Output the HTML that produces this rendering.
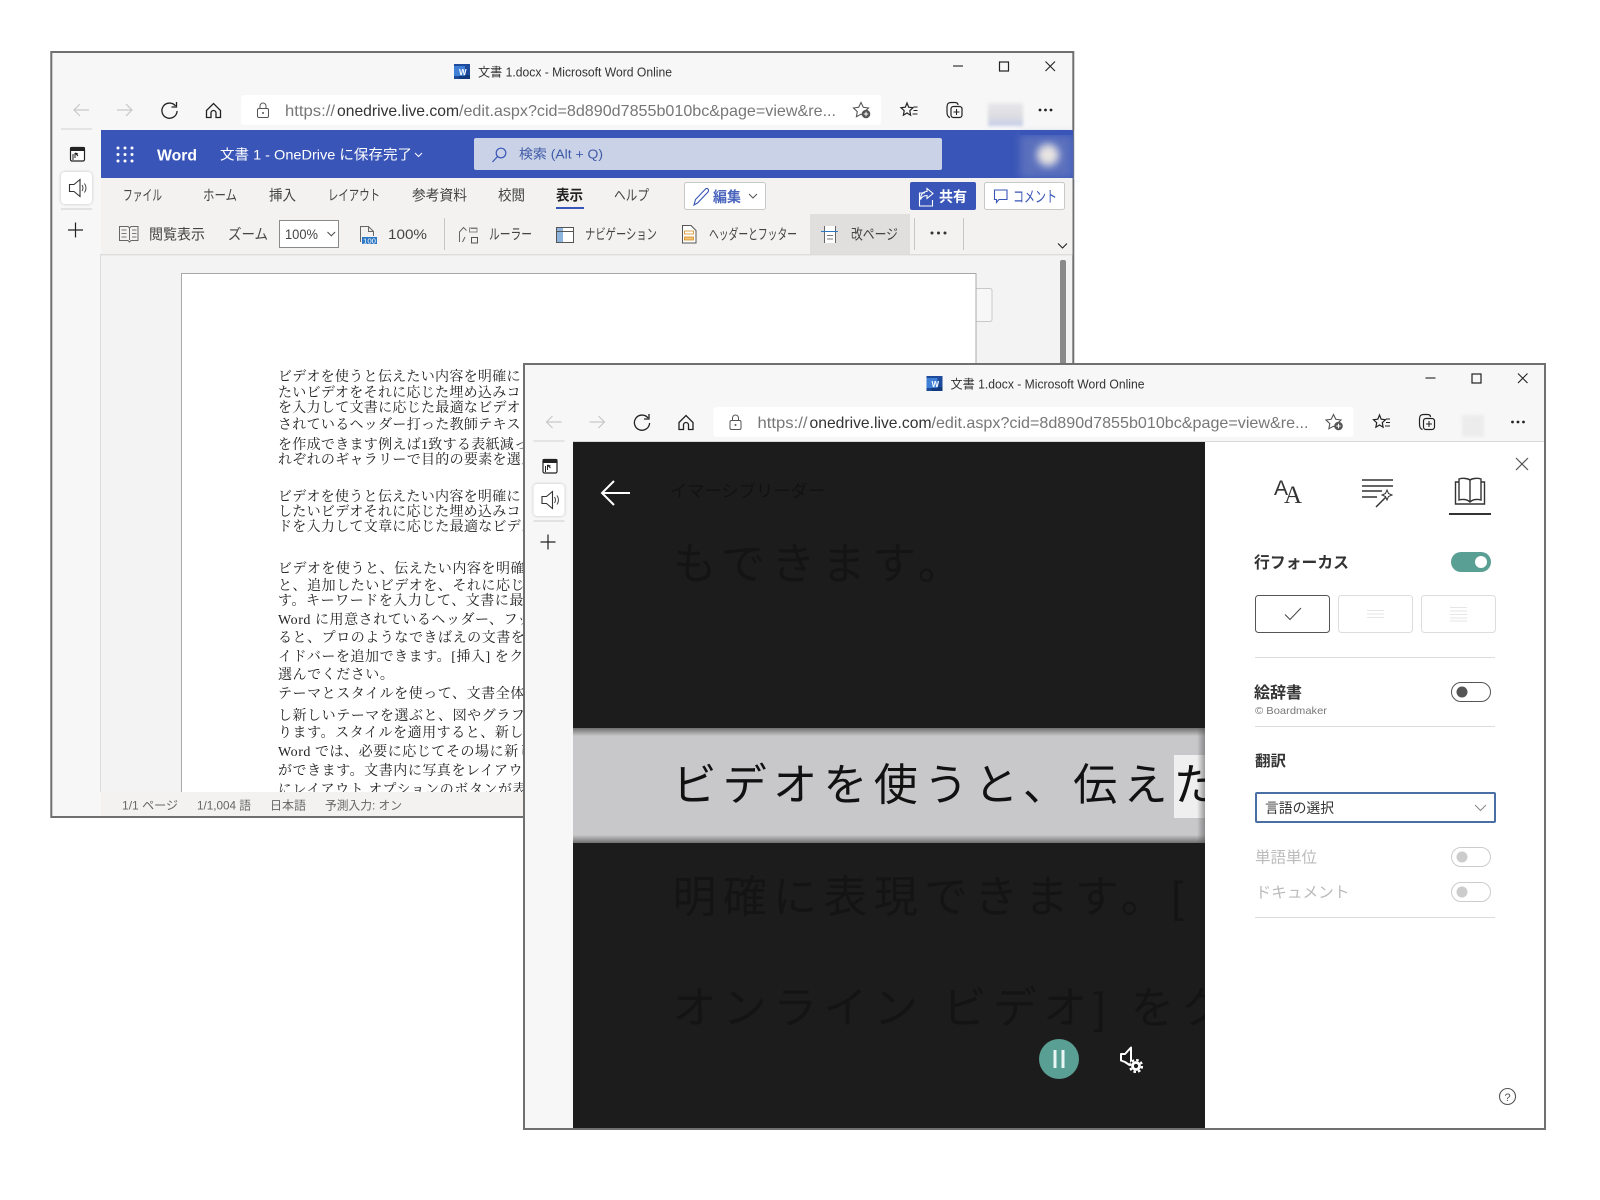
<!DOCTYPE html>
<html lang="ja"><head><meta charset="utf-8"><title>Word Online</title>
<style>
html,body{margin:0;padding:0;background:#fff;width:1600px;height:1200px;overflow:hidden}
svg{display:block}
text{font-family:"Liberation Sans","Noto Sans CJK JP",sans-serif;white-space:pre}
.doc text{font-family:"Liberation Serif","Noto Serif CJK SC",serif;font-size:14px;letter-spacing:.3px;fill:#222}
.doc .w{letter-spacing:.55px}
.t{font-size:14.500px;fill:#444}
.dk{font-size:44px;letter-spacing:6.300px;fill:#141414}
</style></head><body>
<svg xmlns="http://www.w3.org/2000/svg" width="1600" height="1200" viewBox="0 0 1600 1200">
<defs>
<filter id="b4" x="-50%" y="-50%" width="200%" height="200%"><feGaussianBlur stdDeviation="4"/></filter>
<filter id="b1" x="-20%" y="-20%" width="140%" height="140%"><feGaussianBlur stdDeviation="1.500"/></filter>
<linearGradient id="band" x1="0" y1="0" x2="0" y2="1">
<stop offset="0" stop-color="#707070"/><stop offset=".07" stop-color="#c8c8ca"/><stop offset=".93" stop-color="#c8c8ca"/><stop offset="1" stop-color="#707070"/>
</linearGradient>
<linearGradient id="bandr" x1="0" y1="0" x2="1" y2="0">
<stop offset="0" stop-color="#555" stop-opacity="0"/><stop offset="1" stop-color="#555" stop-opacity=".55"/>
</linearGradient>
<linearGradient id="av" x1="0" y1="0" x2="0" y2="1">
<stop offset="0" stop-color="#e8e8ea"/><stop offset=".6" stop-color="#dcdce2"/><stop offset="1" stop-color="#c4cde8"/>
</linearGradient>
<clipPath id="docclip"><rect x="182" y="274" width="794" height="518"/></clipPath>
<clipPath id="darkclip"><rect x="573" y="442" width="632" height="686"/></clipPath>
<g id="icons-nav">
<rect x="241" y="95" width="640" height="30" rx="3" fill="#fff"/>
<path d="M89 110H74M80 104l-6 6 6 6" stroke="#c8c8c8" stroke-width="1.200" fill="none"/>
<path d="M117 110h15M126 104l6 6-6 6" stroke="#c8c8c8" stroke-width="1.200" fill="none"/>
<path d="M175.500 106a7.600 7.600 0 1 0 1.600 5" stroke="#222" stroke-width="1.300" fill="none"/>
<path d="M176.500 102v5h-5" stroke="#222" stroke-width="1.300" fill="none"/>
<path d="M206.500 110.500L213.500 103.500L220.500 110.500V117.500H216V113a2.500 2.500 0 0 0-5 0v4.500H206.500Z" stroke="#222" stroke-width="1.300" fill="none"/>
<rect x="257.500" y="108.500" width="11" height="9" rx="1.500" stroke="#555" stroke-width="1" fill="none"/>
<path d="M260 108.500v-2.500a3 3 0 0 1 6 0v2.500" stroke="#555" stroke-width="1" fill="none"/>
<circle cx="263" cy="113" r="1" fill="#555"/>
<path d="M861 102.500l2.300 4.800 5.200.7-3.800 3.600.9 5.100-4.600-2.500-4.600 2.500.9-5.100-3.800-3.600 5.200-.7z" stroke="#555" stroke-width="1.100" fill="#fff"/>
<circle cx="866" cy="114" r="4.300" fill="#555"/>
<path d="M863.800 114h4.400M866 111.800v4.400" stroke="#fff" stroke-width="1"/>
<path d="M907 103l1.700 4.200 4.300.5-3.200 3 .8 4.500-3.600-2.200-3.600 2.200.8-4.500-3.200-3 4.300-.5z" stroke="#222" stroke-width="1.200" fill="none"/>
<path d="M913.500 107h4M913.500 110.500h4M912.500 114h5" stroke="#222" stroke-width="1.100"/>
<path d="M947 107c0-3 1-4.500 4-4.500h4c2 0 3 1 3 2.500M947 107v5c0 3 1 5 3 5.500" stroke="#222" stroke-width="1.200" fill="none"/>
<rect x="951" y="106.500" width="11" height="11" rx="2.500" stroke="#222" stroke-width="1.200" fill="#f7f7f7"/>
<path d="M956.500 109v6M953.500 112h6" stroke="#222" stroke-width="1.100"/>
<circle cx="1040" cy="110" r="1.400" fill="#222"/><circle cx="1045.500" cy="110" r="1.400" fill="#222"/><circle cx="1051" cy="110" r="1.400" fill="#222"/>
<path d="M953 66h10" stroke="#333" stroke-width="1.200"/>
<rect x="999.500" y="62" width="9" height="9" stroke="#222" stroke-width="1.200" fill="none"/>
<path d="M1045.500 61.500l9.500 9.500M1055 61.500l-9.500 9.500" stroke="#222" stroke-width="1.100"/>
<rect x="454" y="64" width="16" height="15" fill="#1d4a9a"/><rect x="459" y="75" width="11" height="4" fill="#123a7c"/><rect x="454" y="66" width="11" height="10" fill="#3f7fd6"/>
<path d="M61 129h31" stroke="#d0d0d0" stroke-width="1"/>
<rect x="70.500" y="147.500" width="14" height="13.500" rx="1.500" fill="#fff" stroke="#222" stroke-width="1.200"/>
<rect x="70" y="147" width="15" height="4" rx="1" fill="#222"/>
<path d="M75 158v-5M75 153l3 1M75 153l3 3M73 154v6" stroke="#222" stroke-width="1" fill="none"/>
<rect x="61" y="172" width="31" height="32" rx="4" fill="#000" opacity=".22" filter="url(#b1)"/>
<rect x="61" y="172" width="31" height="32" rx="4" fill="#fff"/>
<path d="M69.500 184.500h4.500l6-5v17l-6-5h-4.500z" stroke="#333" stroke-width="1.100" fill="none"/>
<path d="M82 185c1.300 2 1.300 4 0 6M84.500 183.500c2 3 2 6 0 9" stroke="#444" stroke-width="1" fill="none"/>
<path d="M61 209h31" stroke="#ccc" stroke-width="1"/>
<path d="M68 230h15M75.500 222.500v15" stroke="#222" stroke-width="1.200"/>
</g>
</defs>

<!-- WINDOW 1 -->
<rect x="51.300" y="52" width="1022" height="765" fill="#f7f7f7" stroke="#707070" stroke-width="2"/>
<use href="#icons-nav"/>
<text x="459" y="75" font-weight="700" fill="#fff" style="font-size:8px">W</text>
<text x="478" y="76.500" font-size="12.500" fill="#333" textLength="194" lengthAdjust="spacingAndGlyphs">文書 1.docx - Microsoft Word Online</text>
<text x="285" y="116" font-size="16" fill="#777" textLength="50" lengthAdjust="spacingAndGlyphs">https://</text>
<text x="337" y="116" font-size="16" fill="#333" textLength="122" lengthAdjust="spacingAndGlyphs">onedrive.live.com</text>
<text x="459" y="116" font-size="16" fill="#777" textLength="377" lengthAdjust="spacingAndGlyphs">/edit.aspx?cid=8d890d7855b010bc&amp;page=view&amp;re...</text>
<rect x="988" y="103" width="35" height="23" fill="url(#av)" filter="url(#b1)"/>

<!-- header -->
<rect x="101" y="130" width="972" height="48" fill="#3955b7"/>
<g fill="#fff"><circle cx="118" cy="148" r="1.500"/><circle cx="125" cy="148" r="1.500"/><circle cx="132" cy="148" r="1.500"/><circle cx="118" cy="154.500" r="1.500"/><circle cx="125" cy="154.500" r="1.500"/><circle cx="132" cy="154.500" r="1.500"/><circle cx="118" cy="161" r="1.500"/><circle cx="125" cy="161" r="1.500"/><circle cx="132" cy="161" r="1.500"/></g>
<text x="157" y="160.500" font-size="16" font-weight="700" fill="#fff" textLength="40" lengthAdjust="spacingAndGlyphs">Word</text>
<text x="220" y="159.500" font-size="14" fill="#fff" textLength="192" lengthAdjust="spacingAndGlyphs">文書 1 - OneDrive に保存完了</text>
<path d="M415 153l3.500 3.500 3.500-3.500" stroke="#fff" stroke-width="1" fill="none"/>
<rect x="474" y="138" width="468" height="32" rx="2" fill="#c9d2e6"/>
<circle cx="501" cy="153" r="4.800" stroke="#3955b7" stroke-width="1.200" fill="none"/><path d="M497.500 156.500l-5 5.500" stroke="#3955b7" stroke-width="1.200"/>
<text x="519" y="158.500" font-size="13" fill="#3f5aa8" textLength="84" lengthAdjust="spacingAndGlyphs">検索 (Alt + Q)</text>
<rect x="1020" y="135" width="53" height="43" fill="#5a70bd" filter="url(#b4)"/>
<rect x="1020" y="130" width="53" height="5" fill="#3955b7"/>
<circle cx="1048" cy="155" r="11" fill="#e8e4e2" filter="url(#b4)"/>
<rect x="1074.300" y="130" width="8" height="50" fill="#fff"/>

<!-- ribbon -->
<rect x="101" y="178" width="971.500" height="76" fill="#f3f2f1"/>
<rect x="101" y="254" width="971.500" height="1.500" fill="#dcdcdc"/>
<text class="t" x="123" y="200.500" textLength="39" lengthAdjust="spacingAndGlyphs">ファイル</text>
<text class="t" x="203" y="200.500" textLength="34" lengthAdjust="spacingAndGlyphs">ホーム</text>
<text class="t" x="269" y="200.500" textLength="27" lengthAdjust="spacingAndGlyphs">挿入</text>
<text class="t" x="328" y="200.500" textLength="52" lengthAdjust="spacingAndGlyphs">レイアウト</text>
<text class="t" x="412" y="200.500" textLength="55" lengthAdjust="spacingAndGlyphs">参考資料</text>
<text class="t" x="498" y="200.500" textLength="27" lengthAdjust="spacingAndGlyphs">校閲</text>
<text class="t" x="556" y="200.500" font-weight="700" style="fill:#222" textLength="27" lengthAdjust="spacingAndGlyphs">表示</text>
<rect x="556" y="207" width="28" height="2" fill="#3955b7"/>
<text class="t" x="614" y="200.500" textLength="35" lengthAdjust="spacingAndGlyphs">ヘルプ</text>
<rect x="684.500" y="182.500" width="81" height="27" rx="2" fill="#fff" stroke="#c8c8c8"/>
<path d="M694 205l1.500-5.500 10-10.500c1-1 3-.5 3 1.500 0 .5 0 1-.5 1.500L697.500 203z" stroke="#3955b7" stroke-width="1.100" fill="none"/>
<text x="713" y="202" font-size="14.500" font-weight="700" fill="#4a64bd" textLength="28" lengthAdjust="spacingAndGlyphs">編集</text>
<path d="M749 194l4 4 4-4" stroke="#555" stroke-width="1" fill="none"/>
<rect x="910" y="182" width="66" height="28" rx="2" fill="#3955b7"/>
<path d="M925 193h-5.500v13h13v-6M927 188.500l6 5-6 5v-3c-3 0-5 1-6.500 4 0-5 2.500-8 6.500-8z" stroke="#fff" stroke-width="1.100" fill="none"/>
<text x="939" y="202" font-size="14.500" font-weight="700" fill="#fff" textLength="28" lengthAdjust="spacingAndGlyphs">共有</text>
<rect x="984.500" y="182.500" width="80" height="27" rx="2" fill="#fff" stroke="#c8c8c8"/>
<path d="M994.500 190h12.500v9.500h-8l-2.500 3v-3h-2z" stroke="#3955b7" stroke-width="1.100" fill="none"/>
<text x="1013" y="202" font-size="15.500" fill="#3955b7" textLength="44" lengthAdjust="spacingAndGlyphs">コメント</text>

<!-- ribbon row 2 -->
<path d="M119.500 226.500h8.500l1.500 1.500 1.500-1.500h7v14h-7l-1.500 1.500-1.500-1.500h-8.500zM129.500 228v12" stroke="#666" stroke-width="1" fill="#f3f2f1"/>
<path d="M121.500 230h5M121.500 233.500h5M121.500 237h5M132 230h4.500M132 233.500h4.500M132 237h4.500" stroke="#777" stroke-width="1"/>
<text class="t" x="149" y="239.500" textLength="56" lengthAdjust="spacingAndGlyphs">閲覧表示</text>
<text class="t" x="228" y="239.500" textLength="40" lengthAdjust="spacingAndGlyphs">ズーム</text>
<rect x="279.500" y="220.500" width="59" height="27" fill="#fff" stroke="#8a8a8a"/>
<text x="285" y="239" font-size="13.500" fill="#444" textLength="33" lengthAdjust="spacingAndGlyphs">100%</text>
<path d="M327.500 232l3.800 3.800 3.800-3.800" stroke="#444" stroke-width="1" fill="none"/>
<path d="M360.500 242v-15.500h8l5 5V236M368.500 226.500v5h5" stroke="#666" stroke-width="1" fill="none"/>
<rect x="362" y="237" width="15" height="7" fill="#2d78c4"/>
<text x="363" y="243.500" fill="#fff" textLength="13" lengthAdjust="spacingAndGlyphs" style="font-size:7px">100</text>
<text x="388" y="239" font-size="14" fill="#444" textLength="39" lengthAdjust="spacingAndGlyphs">100%</text>
<path d="M444.500 218v32" stroke="#c8c6c4"/>
<path d="M459.500 242v-10l4-4.500 3 3M465 237l-2.500 5M471 228.500h6" stroke="#666" stroke-width="1" fill="none"/>
<rect x="471.500" y="237.500" width="6" height="5.500" stroke="#555" fill="none"/>
<rect x="469.500" y="228" width="7.500" height="4" fill="none" stroke="#888"/>
<text class="t" x="489" y="239.500" textLength="43" lengthAdjust="spacingAndGlyphs">ルーラー</text>
<rect x="556.500" y="227.500" width="17" height="15" fill="#fff" stroke="#555"/><rect x="557" y="228" width="6" height="14" fill="#8db4dd"/>
<path d="M556.500 231.500h17" stroke="#555"/>
<text class="t" x="585" y="239.500" textLength="72" lengthAdjust="spacingAndGlyphs">ナビゲーション</text>
<path d="M682.500 243v-17.500h8.500l5 5V243z" stroke="#555" fill="#fff"/>
<rect x="684.500" y="231" width="9" height="3" fill="#fff" stroke="#d48a1e" stroke-width=".8"/>
<rect x="684.500" y="237" width="9" height="3" fill="#f3c47a" stroke="#d48a1e" stroke-width=".8"/>
<text class="t" x="709" y="239.500" textLength="88" lengthAdjust="spacingAndGlyphs">ヘッダーとフッター</text>
<rect x="810" y="214" width="100" height="40" fill="#e1dfdd"/>
<rect x="824" y="226" width="12" height="17" fill="#fff"/>
<path d="M824.500 226v17M835.500 226v17" stroke="#666"/>
<path d="M821 231.500h17" stroke="#2d78c4"/><path d="M827 235.500h6M827 239h6" stroke="#777"/>
<text class="t" x="851" y="239.500" textLength="47" lengthAdjust="spacingAndGlyphs">改ページ</text>
<path d="M914.500 218v32M963.500 218v32" stroke="#c8c6c4"/>
<circle cx="932" cy="233" r="1.500" fill="#333"/><circle cx="938.500" cy="233" r="1.500" fill="#333"/><circle cx="945" cy="233" r="1.500" fill="#333"/>
<path d="M1058 243.500l4.500 4.500 4.500-4.500" stroke="#222" stroke-width="1.100" fill="none"/>

<!-- doc -->
<rect x="101" y="256" width="971" height="536" fill="#f3f3f3"/>
<path d="M100.500 254v538" stroke="#dcdcdc"/>
<rect x="970" y="288.500" width="22" height="33" rx="2" fill="#f7f7f7" stroke="#c8c8c8"/>
<rect x="181.500" y="273.500" width="794.500" height="530" fill="#fff" stroke="#a8a8a8"/>
<rect x="1060" y="260" width="6" height="110" rx="2" fill="#8a8a8a"/>
<g class="doc" clip-path="url(#docclip)">
<text x="278" y="381">ビデオを使うと伝えたい内容を明確に</text>
<text x="278" y="397">たいビデオをそれに応じた埋め込みコ</text>
<text x="278" y="412">を入力して文書に応じた最適なビデオ</text>
<text x="278" y="429">されているヘッダー打った教師テキス</text>
<text x="278" y="449">を作成できます例えば1致する表紙減っ</text>
<text x="278" y="464">れぞれのギャラリーで目的の要素を選ん</text>
<text x="278" y="501">ビデオを使うと伝えたい内容を明確に</text>
<text x="278" y="516">したいビデオそれに応じた埋め込みコ</text>
<text x="278" y="531">ドを入力して文章に応じた最適なビデオ</text>
<text class="w" x="278" y="573">ビデオを使うと、伝えたい内容を明確</text>
<text class="w" x="278" y="590">と、追加したいビデオを、それに応じ</text>
<text class="w" x="278" y="605">す。キーワードを入力して、文書に最適</text>
<text class="w" x="278" y="624">Word に用意されているヘッダー、フッ</text>
<text class="w" x="278" y="642">ると、プロのようなできばえの文書を</text>
<text class="w" x="278" y="661">イドバーを追加できます。[挿入] をク</text>
<text class="w" x="278" y="679">選んでください。</text>
<text class="w" x="278" y="698">テーマとスタイルを使って、文書全体</text>
<text class="w" x="278" y="720">し新しいテーマを選ぶと、図やグラフ、</text>
<text class="w" x="278" y="737">ります。スタイルを適用すると、新しい</text>
<text class="w" x="278" y="756">Word では、必要に応じてその場に新し</text>
<text class="w" x="278" y="775">ができます。文書内に写真をレイアウ</text>
<text class="w" x="278" y="794">にレイアウト オプションのボタンが表</text>
</g>
<!-- status -->
<rect x="101" y="792" width="971" height="24" fill="#f3f2f1"/>
<text x="122" y="809.500" font-size="12" fill="#666" textLength="56" lengthAdjust="spacingAndGlyphs">1/1 ページ</text>
<text x="197" y="809.500" font-size="12" fill="#666" textLength="54" lengthAdjust="spacingAndGlyphs">1/1,004 語</text>
<text x="270" y="809.500" font-size="12" fill="#666" textLength="36" lengthAdjust="spacingAndGlyphs">日本語</text>
<text x="325" y="809.500" font-size="12" fill="#666" textLength="77" lengthAdjust="spacingAndGlyphs">予測入力: オン</text>

<!-- WINDOW 2 -->
<rect x="524" y="364" width="1021" height="765" fill="#f7f7f7" stroke="#707070" stroke-width="2"/>
<use href="#icons-nav" x="472.500" y="312"/>
<text x="931.500" y="387" fill="#fff" style="font-size:8px" font-weight="700">W</text>
<text x="950.500" y="388.500" font-size="12.500" fill="#333" textLength="194" lengthAdjust="spacingAndGlyphs">文書 1.docx - Microsoft Word Online</text>
<text x="757.500" y="428" font-size="16" fill="#777" textLength="50" lengthAdjust="spacingAndGlyphs">https://</text>
<text x="809.500" y="428" font-size="16" fill="#333" textLength="122" lengthAdjust="spacingAndGlyphs">onedrive.live.com</text>
<text x="931.500" y="428" font-size="16" fill="#777" textLength="377" lengthAdjust="spacingAndGlyphs">/edit.aspx?cid=8d890d7855b010bc&amp;page=view&amp;re...</text>
<rect x="1462" y="415" width="22" height="22" fill="#ececec" filter="url(#b1)"/>
<path d="M573 441.500h971" stroke="#d8d8d8"/>

<!-- dark area -->
<rect x="573" y="442" width="632" height="686" fill="#1c1c1c"/>
<path d="M630 493H603M614 481l-12 12 12 12" stroke="#fff" stroke-width="2" fill="none"/>
<text x="670" y="497" font-size="17" fill="#121212" textLength="155" lengthAdjust="spacingAndGlyphs">イマーシブリーダー</text>
<g clip-path="url(#darkclip)">
<text class="dk" x="672.500" y="579">もできます。</text>
<rect x="573" y="728" width="632" height="115" fill="url(#band)"/>
<rect x="1174" y="755" width="31" height="63" fill="#efefef"/>
<rect x="1197" y="728" width="8" height="115" fill="url(#bandr)"/>
<text class="dk" x="672.500" y="800" style="fill:#111">ビデオを使うと、伝えた</text>
<text class="dk" x="672.500" y="912">明確に表現できます。[</text>
<text class="dk" x="672.500" y="1023">オンライン ビデオ] をク</text>
</g>
<circle cx="1059" cy="1059" r="20" fill="#5a9f94"/>
<rect x="1053.500" y="1050" width="3" height="18" fill="#e8f6f4"/><rect x="1061.500" y="1050" width="3" height="18" fill="#e8f6f4"/>
<path d="M1121 1054v6.500l4 1.500 6 4v-18.500l-6 6.500z" stroke="#fff" stroke-width="2" fill="none" stroke-linejoin="round"/>
<circle cx="1136" cy="1066" r="6.500" fill="#1c1c1c"/>
<circle cx="1136" cy="1066" r="3.500" fill="none" stroke="#fff" stroke-width="2.800"/>
<circle cx="1136" cy="1066" r="6" fill="none" stroke="#fff" stroke-width="2.200" stroke-dasharray="2.600 2.110"/>

<!-- right panel -->
<rect x="1205" y="442" width="339" height="686" fill="#fff"/>
<path d="M1516 458l12 12M1528 458l-12 12" stroke="#555" stroke-width="1.200"/>
<text x="1274" y="495" fill="#333" style="font-size:21px" textLength="14" lengthAdjust="spacingAndGlyphs">A</text>
<text x="1284" y="503" fill="#333" style="font-family:'Liberation Serif',serif;font-size:25px" textLength="18" lengthAdjust="spacingAndGlyphs">A</text>
<path d="M1362 480h31M1362 486h31M1362 491h20M1362 497h15" stroke="#333" stroke-width="1.500"/>
<path d="M1376 507l10-10" stroke="#333" stroke-width="1.500"/>
<path d="M1387 490l1.500 3.500 3.500 1.500-3.500 1.500-1.500 3.500-1.500-3.500-3.500-1.500 3.500-1.500z" fill="#fff" stroke="#333" stroke-width="1"/>
<path d="M1470 480c-3-2-8-2-11-1v21c3-1 8-1 11 2 3-3 8-3 11-2v-21c-3-1-8-1-11 1zM1470 480v22" stroke="#333" stroke-width="1.400" fill="none"/>
<path d="M1459 482h-3.500v22h29v-22H1481" stroke="#333" stroke-width="1.400" fill="none"/>
<rect x="1449" y="513" width="42" height="2" fill="#333"/>
<text x="1254" y="568" font-size="16" font-weight="700" fill="#333" textLength="95" lengthAdjust="spacingAndGlyphs">行フォーカス</text>
<rect x="1451" y="552" width="40" height="20" rx="10" fill="#5a9f94"/><circle cx="1481" cy="562" r="6" fill="#fff"/>
<rect x="1255.500" y="595.500" width="74" height="37" rx="3" fill="#fff" stroke="#555"/>
<path d="M1285 614.500l5 5 11-11.500" stroke="#444" stroke-width="1" fill="none"/>
<rect x="1338.500" y="595.500" width="74" height="37" rx="3" fill="#fff" stroke="#ddd"/>
<path d="M1367 610.500h17M1367 614h17M1367 617.500h17" stroke="#e6e6e6"/>
<rect x="1421.500" y="595.500" width="74" height="37" rx="3" fill="#fff" stroke="#ddd"/>
<path d="M1450 607.500h17M1450 611h17M1450 614.500h17M1450 618h17M1450 621h17" stroke="#e6e6e6"/>
<path d="M1255 657.500h240M1255 726.500h240M1255 917.500h240" stroke="#dcdcdc"/>
<text x="1254" y="698" font-size="16" font-weight="700" fill="#333" textLength="48" lengthAdjust="spacingAndGlyphs">絵辞書</text>
<rect x="1451.500" y="682.500" width="39" height="19" rx="9.500" fill="#fff" stroke="#555"/><circle cx="1462" cy="692" r="5.500" fill="#555"/>
<text x="1255" y="714" font-size="10.500" fill="#777" textLength="72" lengthAdjust="spacingAndGlyphs">© Boardmaker</text>
<text x="1255" y="766" font-size="15" font-weight="700" fill="#333" textLength="31" lengthAdjust="spacingAndGlyphs">翻訳</text>
<rect x="1256" y="793" width="239" height="29" rx="1" fill="#fff" stroke="#4a6fa5" stroke-width="2"/>
<text x="1265" y="813" font-size="14" fill="#333" textLength="69" lengthAdjust="spacingAndGlyphs">言語の選択</text>
<path d="M1475 805l5.500 5.500 5.500-5.500" stroke="#888" stroke-width="1" fill="none"/>
<text x="1255" y="862.500" font-size="15.500" fill="#bbb" textLength="62" lengthAdjust="spacingAndGlyphs">単語単位</text>
<rect x="1451.500" y="847.500" width="39" height="19" rx="9.500" fill="#fff" stroke="#ccc"/><circle cx="1462" cy="857" r="5.500" fill="#ccc"/>
<text x="1255.500" y="897.500" font-size="15.500" fill="#bbb" textLength="94" lengthAdjust="spacingAndGlyphs">ドキュメント</text>
<rect x="1451.500" y="882.500" width="39" height="19" rx="9.500" fill="#fff" stroke="#ccc"/><circle cx="1462" cy="892" r="5.500" fill="#ccc"/>
<circle cx="1507.500" cy="1096.500" r="8" stroke="#555" stroke-width="1.100" fill="none"/>
<text x="1504.500" y="1101" fill="#555" style="font-size:11px">?</text>
</svg>
</body></html>
